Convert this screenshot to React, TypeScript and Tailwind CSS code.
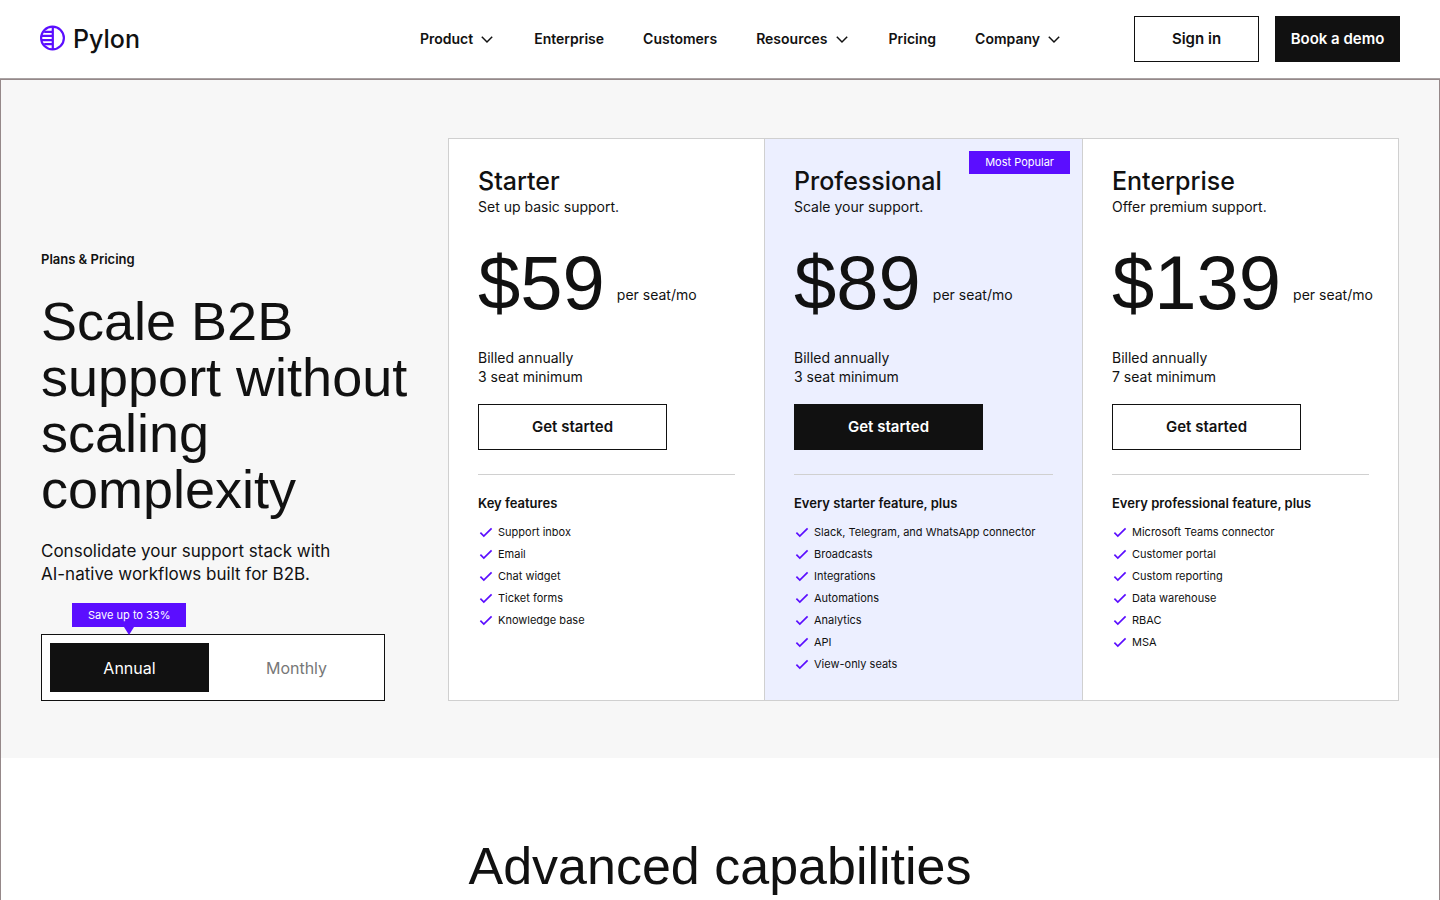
import { useState } from "react";

const navItems = [
  { label: "Product", menu: true },
  { label: "Enterprise", menu: false },
  { label: "Customers", menu: false },
  { label: "Resources", menu: true },
  { label: "Pricing", menu: false },
  { label: "Company", menu: true },
];

const plans = [
  {
    name: "Starter",
    tagline: "Set up basic support.",
    price: "$59",
    seats: "3 seat minimum",
    heading: "Key features",
    features: ["Support inbox", "Email", "Chat widget", "Ticket forms", "Knowledge base"],
    popular: false,
  },
  {
    name: "Professional",
    tagline: "Scale your support.",
    price: "$89",
    seats: "3 seat minimum",
    heading: "Every starter feature, plus",
    features: [
      "Slack, Telegram, and WhatsApp connector",
      "Broadcasts",
      "Integrations",
      "Automations",
      "Analytics",
      "API",
      "View-only seats",
    ],
    popular: true,
  },
  {
    name: "Enterprise",
    tagline: "Offer premium support.",
    price: "$139",
    seats: "7 seat minimum",
    heading: "Every professional feature, plus",
    features: [
      "Microsoft Teams connector",
      "Customer portal",
      "Custom reporting",
      "Data warehouse",
      "RBAC",
      "MSA",
    ],
    popular: false,
  },
];

function Logo() {
  return (
    <a href="#" className="flex items-center gap-2">
      <svg width="25" height="28" viewBox="0 0 25 28" fill="none" stroke="#5b0eff" strokeWidth="2.2" aria-hidden="true">
        <circle cx="12.5" cy="13" r="11.4" />
        <path d="M12.8 1.7v22.6M4.2 6.8h8.6M1.4 10.9h11.4M1.4 15.1h11.4M4.2 19.2h8.6" />
      </svg>
      <span className="text-[25px] leading-8 font-medium">Pylon</span>
    </a>
  );
}

function Chevron() {
  return (
    <svg width="16" height="16" viewBox="0 0 16 16" fill="none" stroke="currentColor" strokeWidth="1.5" aria-hidden="true">
      <path d="M2.8 5.8L8 11l5.2-5.2" />
    </svg>
  );
}

function Check() {
  return (
    <svg width="16" height="16" viewBox="0 0 16 16" fill="none" stroke="#5b0eff" strokeWidth="1.7" className="shrink-0" aria-hidden="true">
      <path d="M2.4 8.7l3.4 3.3 7.8-7.6" />
    </svg>
  );
}

function PlanCard({ plan }: { plan: (typeof plans)[number] }) {
  return (
    <article
      className={`relative border border-[#d0d0d0] px-[29px] pt-7 pb-[25px] ${
        plan.popular ? "z-10 -mx-px bg-[#ecefff]" : "bg-white"
      }`}
    >
      {plan.popular && (
        <span className="absolute top-3 right-3 bg-[#5b0eff] px-4 text-[11px] leading-[23px] text-white">
          Most Popular
        </span>
      )}
      <h2 className="text-[25px] leading-7 font-medium">{plan.name}</h2>
      <p className="mt-0.5 text-sm leading-5">{plan.tagline}</p>

      <div className="mt-[26px] flex items-end gap-3 whitespace-nowrap">
        <span className="font-['Liberation_Sans',sans-serif] text-[76px] leading-[80px]">{plan.price}</span>
        <span className="mb-[18px] text-sm leading-5">per seat/mo</span>
      </div>

      <p className="mt-[25px] text-sm leading-[19px]">
        Billed annually
        <br />
        {plan.seats}
      </p>
      <button
        type="button"
        className={`mt-[18px] block h-[46px] w-[189px] border border-[#111] text-[15px] font-semibold ${
          plan.popular ? "bg-[#111] text-white" : "bg-white"
        }`}
      >
        Get started
      </button>

      <hr className="mt-6 border-[#d0d0d0]" />
      <h3 className="mt-[18px] text-[13px] leading-5 font-semibold">{plan.heading}</h3>
      <ul className="mt-2">
        {plan.features.map((feature) => (
          <li key={feature} className="flex items-center gap-1 text-[11px] leading-[22px] whitespace-nowrap">
            <Check />
            {feature}
          </li>
        ))}
      </ul>
    </article>
  );
}

export default function App() {
  const [billing, setBilling] = useState("Annual");

  return (
    <div className="flex min-h-screen flex-col bg-white font-['Inter',sans-serif] text-[#111]">
      <header className="flex h-[79px] shrink-0 items-center border-b border-[#aaa3a4] px-10">
        <Logo />
        <nav className="mr-[72px] ml-auto flex items-center gap-[39px]">
          {navItems.map((item) =>
            item.menu ? (
              <button key={item.label} type="button" className="flex items-center gap-1.5 text-sm font-semibold">
                {item.label}
                <Chevron />
              </button>
            ) : (
              <a key={item.label} href="#" className="text-sm font-semibold">
                {item.label}
              </a>
            ),
          )}
        </nav>
        <div className="flex gap-4 text-[15px] font-semibold">
          <a href="#" className="flex h-[46px] w-[125px] items-center justify-center border border-[#111]">
            Sign in
          </a>
          <a href="#" className="flex h-[46px] w-[125px] items-center justify-center bg-[#111] text-white">
            Book a demo
          </a>
        </div>
      </header>

      <main className="flex flex-1 flex-col border border-b-0 border-[#958889]">
        {/* Hero with the plan table */}
        <section className="flex bg-[#f7f7f7] px-10 pt-[58px] pb-[57px]">
          <div className="flex w-[407px] shrink-0 flex-col justify-end">
            <p className="text-[13px] leading-5 font-semibold">Plans &amp; Pricing</p>
            <h1 className="mt-6 font-['Liberation_Sans',sans-serif] text-[54px] leading-[56px]">
              Scale B2B
              <br />
              support without
              <br />
              scaling
              <br />
              complexity
            </h1>
            <p className="mt-[23px] text-[17px] leading-[23px]">
              Consolidate your support stack with
              <br />
              AI-native workflows built for B2B.
            </p>

            <div className="relative mt-12 w-[344px]">
              <div className="absolute bottom-full left-[31px] mb-[7px] bg-[#5b0eff] px-4 text-[11px] leading-6 text-white">
                Save up to 33%
                <svg width="10" height="8" viewBox="0 0 10 8" className="absolute top-full left-1/2 -translate-x-1/2" aria-hidden="true">
                  <path d="M0 0h10L5 8z" fill="#5b0eff" />
                </svg>
              </div>
              <div className="grid grid-cols-2 gap-2 border border-[#111] bg-white p-2">
                {["Annual", "Monthly"].map((option) => (
                  <button
                    key={option}
                    type="button"
                    aria-pressed={billing === option}
                    onClick={() => setBilling(option)}
                    className={`h-[49px] text-base ${billing === option ? "bg-[#111] text-white" : "text-[#777]"}`}
                  >
                    {option}
                  </button>
                ))}
              </div>
            </div>
          </div>

          <div className="grid flex-1 grid-cols-3">
            {plans.map((plan) => (
              <PlanCard key={plan.name} plan={plan} />
            ))}
          </div>
        </section>

        <section className="flex-1 pt-20 text-center">
          <h2 className="font-['Liberation_Sans',sans-serif] text-[52px] leading-[56px]">Advanced capabilities</h2>
        </section>
      </main>
    </div>
  );
}
